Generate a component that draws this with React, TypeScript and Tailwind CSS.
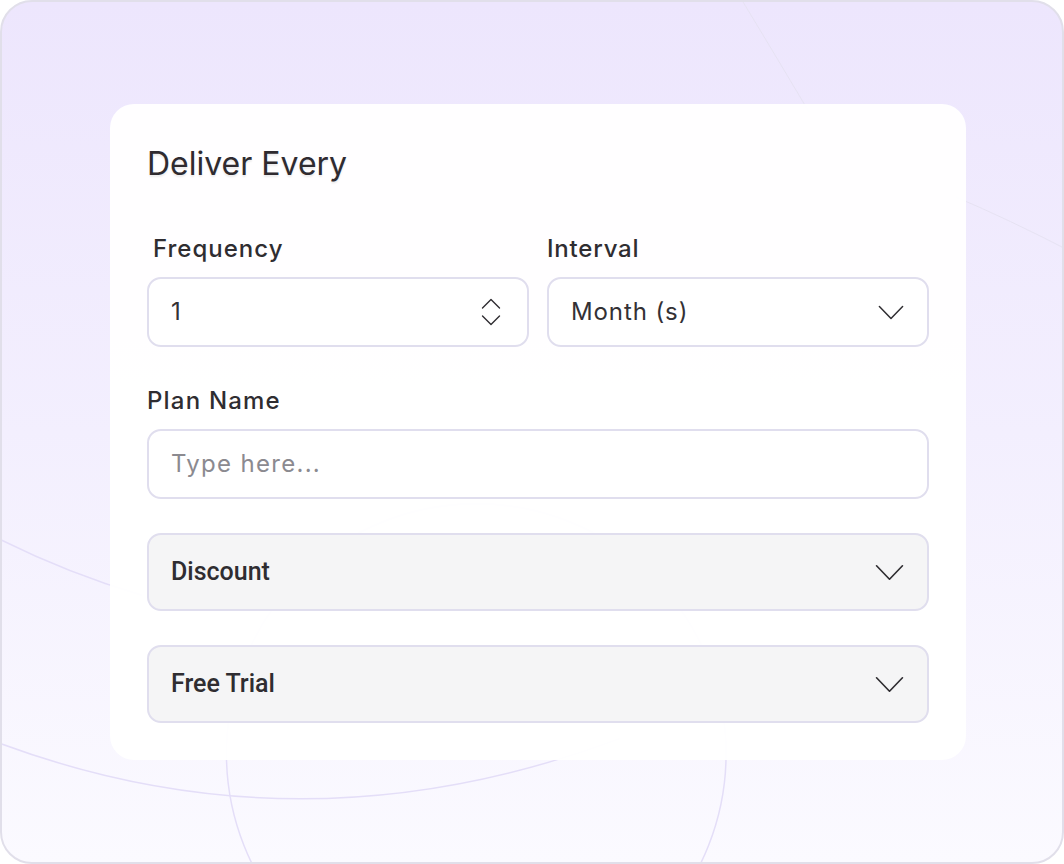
const Chevron = ({ className }: { className?: string }) => (
  <svg className={className} viewBox="0 0 28 16" fill="none" stroke="#2f2d31" strokeWidth="1.6" strokeLinecap="round" strokeLinejoin="round">
    <path d="M1.5 1.5 14 14.5 26.5 1.5" />
  </svg>
);

const Spinner = () => (
  <svg className="w-[20px] h-[28px]" viewBox="0 0 20 28" fill="none" stroke="#2f2d31" strokeWidth="1.4" strokeLinecap="round" strokeLinejoin="round">
    <path d="M1.5 10 10 1.5 18.5 10" />
    <path d="M1.5 18 10 26.5 18.5 18" />
  </svg>
);

// faint rings behind the card
const Backdrop = () => (
  <svg className="absolute inset-0 w-full h-full" viewBox="0 0 1064 864" fill="none" stroke="#e4def8" strokeWidth="1.5">
    <circle cx="476" cy="755" r="251" />
    <path d="M -10 742 Q 300 860 620 740" />
    <path d="M -10 536 Q 60 572 140 596" />
    <path d="M 738 -10 Q 772 46 810 110" stroke="#e6e2f2" strokeWidth="1" />
    <path d="M 958 196 Q 1010 218 1072 250" stroke="#e6e2f2" strokeWidth="1" />
  </svg>
);

export default function App() {
  return (
    <div className="w-[1064px] h-[864px] relative overflow-hidden rounded-[32px] border-2 border-[#e1dfea] bg-gradient-to-b from-[#ede6fd] via-[#f3effe] to-[#fbfaff] font-['Inter',sans-serif]">
      <Backdrop />
      <div className="relative pt-[102px] pl-[108px]">
        <div className="w-[856px] rounded-[24px] bg-white/95 px-[37px] pt-[40px] pb-[37px]">
          <h1 className="text-[32px] leading-[40px] text-[#2f2b30] [text-shadow:0_2px_2px_rgba(0,0,0,0.08)]">Deliver Every</h1>

          <div className="mt-[49px] grid grid-cols-2 gap-x-[18px]">
            <div>
              <div className="pl-[6px] text-[24px] leading-[32px] font-medium tracking-[1px] text-[#2f2d31]">Frequency</div>
              <div className="mt-[12px] h-[70px] rounded-[14px] border-2 border-[#e0deee] bg-white flex items-center justify-between pl-[22px] pr-[26px]">
                <span className="text-[24px] tracking-[0.8px] text-[#333135]">1</span>
                <Spinner />
              </div>
            </div>
            <div>
              <div className="text-[24px] leading-[32px] font-medium tracking-[0.8px] text-[#2f2d31]">Interval</div>
              <div className="mt-[12px] h-[70px] rounded-[14px] border-2 border-[#e0deee] bg-white flex items-center justify-between pl-[22px] pr-[23px]">
                <span className="text-[24px] tracking-[0.9px] text-[#333135]">Month (s)</span>
                <Chevron className="w-[26px] h-[15px]" />
              </div>
            </div>
          </div>

          <div className="mt-[38px] text-[24px] leading-[32px] font-medium tracking-[1.2px] text-[#2f2d31]">Plan Name</div>
          <div className="mt-[12px] h-[70px] rounded-[14px] border-2 border-[#e0deee] bg-white flex items-center pl-[22px]">
            <span className="text-[24px] tracking-[1.3px] text-[#8b8a90]">Type here...</span>
          </div>

          <div className="mt-[34px] flex flex-col gap-[34px]">
            {['Discount', 'Free Trial'].map(label => (
              <div key={label} className="h-[78px] rounded-[14px] border-2 border-[#e0deee] bg-[#f5f5f6] flex items-center justify-between pl-[22px] pr-[23px]">
                <span className="font-['Roboto',sans-serif] font-medium text-[25px] text-[#2f2d31]">{label}</span>
                <Chevron className="w-[29px] h-[17px]" />
              </div>
            ))}
          </div>
        </div>
      </div>
    </div>
  );
}
